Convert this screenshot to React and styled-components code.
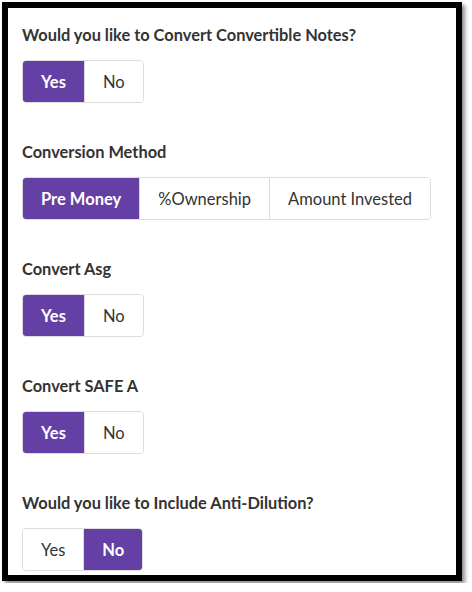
import React, { useState } from 'react'
import styled, { createGlobalStyle } from 'styled-components'

const Purple = '#6440a5';

const GlobalStyle = createGlobalStyle`
  html, body {
    margin: 0;
    padding: 0;
    background: #ffffff;
  }
  body {
    font-family: Lato, "Open Sans", Arial, sans-serif;
    color: #333333;
  }
`;

const questions = [
  { id: 'convertNotes', label: 'Would you like to Convert Convertible Notes?', options: ['Yes', 'No'], initial: 'Yes' },
  { id: 'method', label: 'Conversion Method', options: ['Pre Money', '%Ownership', 'Amount Invested'], initial: 'Pre Money' },
  { id: 'asg', label: 'Convert Asg', options: ['Yes', 'No'], initial: 'Yes' },
  { id: 'safeA', label: 'Convert SAFE A', options: ['Yes', 'No'], initial: 'Yes' },
  { id: 'antiDilution', label: 'Would you like to Include Anti-Dilution?', options: ['Yes', 'No'], initial: 'No' },
];

function ToggleGroup({ options, value, onChange }) {
  return (
    <Group>
      {options.map((opt) => (
        <Option
          key={opt}
          type="button"
          $active={opt === value}
          onClick={() => onChange(opt)}
        >
          {opt}
        </Option>
      ))}
    </Group>
  );
}

export default function App() {
  const [answers, setAnswers] = useState(
    Object.fromEntries(questions.map((q) => [q.id, q.initial]))
  );

  return (
    <>
      <GlobalStyle />
      <Frame>
        {questions.map((q) => (
          <Section key={q.id}>
            <Title>{q.label}</Title>
            <ToggleGroup
              options={q.options}
              value={answers[q.id]}
              onChange={(v) => setAnswers({ ...answers, [q.id]: v })}
            />
          </Section>
        ))}
      </Frame>
    </>
  );
}

const Frame = styled.div`
  box-sizing: border-box;
  width: 460px;
  height: 579px;
  margin: 2px;
  border: 6px solid #000000;
  box-shadow: 3px 3px 4px rgba(0, 0, 0, 0.45);
  background: #ffffff;
  padding: 17px 14px 0;
  display: flex;
  flex-direction: column;
  gap: 39px;
`;

const Section = styled.div`
  display: flex;
  flex-direction: column;
  align-items: flex-start;
  gap: 15px;
`;

const Title = styled.div`
  font-size: 16.4px;
  line-height: 20px;
  font-weight: 700;
  color: #333333;
`;

const Group = styled.div`
  display: inline-flex;
  border: 1px solid #dcdcdc;
  border-radius: 4px;
  overflow: hidden;
  height: 43px;
  box-sizing: border-box;
`;

const Option = styled.button`
  font-family: Lato, "Open Sans", Arial, sans-serif;
  font-size: 16.5px;
  font-weight: ${(p) => (p.$active ? 700 : 400)};
  color: ${(p) => (p.$active ? '#ffffff' : '#333333')};
  background: ${(p) => (p.$active ? Purple : '#ffffff')};
  border: none;
  border-left: 1px solid #dcdcdc;
  padding: 0 18px;
  margin: 0;
  cursor: pointer;

  &:first-child {
    border-left: none;
  }
`;
